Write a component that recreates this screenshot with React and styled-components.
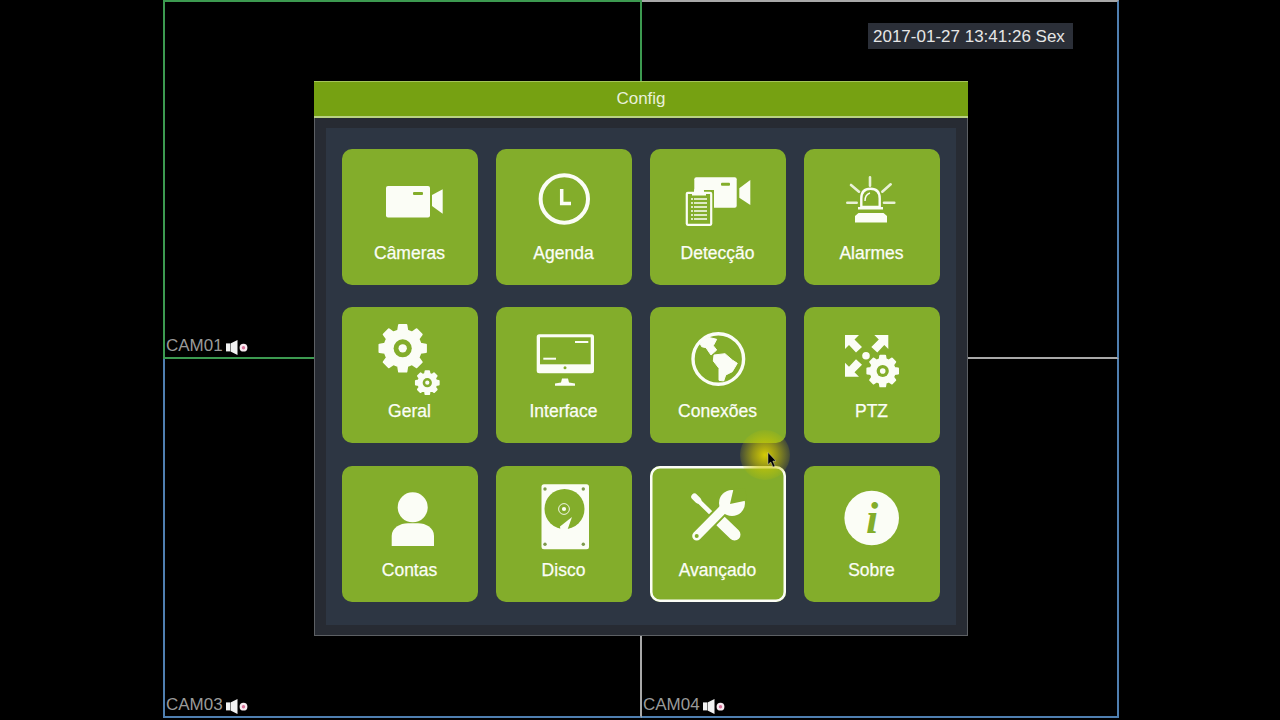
import React from 'react';
import styled, { createGlobalStyle } from 'styled-components';

const GREEN = '#83ad2b';
const WHITE = '#fbfdf6';

const GlobalStyle = createGlobalStyle`
  html, body {
    margin: 0;
    background: #000;
    font-family: "Liberation Sans", Arial, sans-serif;
  }
`;

const Screen = styled.div`
  position: relative;
  width: 1280px;
  height: 720px;
  overflow: hidden;
  background: #000;
  padding-left: 163px;
  box-sizing: border-box;
`;

const Wall = styled.div`
  display: grid;
  grid-template-columns: 479px 477px;
  grid-template-rows: 359px 359px;
  width: 956px;
  height: 718px;
`;

const Cell = styled.div`
  box-sizing: border-box;
  display: flex;
  align-items: flex-end;
  gap: 4px;
  padding: 0 0 1px 1px;
  border-style: solid;
  border-width: ${p => p.$widths};
  border-color: ${p => p.$colors};
`;

const CamName = styled.span`
  color: #9a9a9a;
  font-size: 17px;
  line-height: 20px;
`;

const SoundSvg = styled.svg`
  display: block;
  width: 22px;
  height: 15px;
  margin-left: -1px;
  margin-bottom: 1px;
`;

const Clock = styled.div`
  position: absolute;
  left: 868px;
  top: 23px;
  width: 205px;
  height: 26px;
  box-sizing: border-box;
  padding-left: 5px;
  background: #2b2f38;
  color: #e6e6e6;
  font-size: 17px;
  line-height: 27px;
  white-space: nowrap;
`;

const Modal = styled.div`
  position: absolute;
  left: 314px;
  top: 81px;
  width: 654px;
  height: 555px;
  box-sizing: border-box;
  display: flex;
  flex-direction: column;
  background: #272b33;
  border: 1px solid #5d6064;
  border-top: 0;
`;

const TitleBar = styled.div`
  flex: none;
  height: 37px;
  box-sizing: border-box;
  margin: 0 -1px;
  padding-bottom: 1px;
  display: flex;
  align-items: center;
  justify-content: center;
  background: #76a112;
  border-top: 1px solid #a5c45a;
  border-bottom: 2px solid #b9d184;
  color: #e9f0da;
  font-size: 17px;
`;

const Panel = styled.div`
  margin: 10px 11px 10px;
  flex: 1;
  box-sizing: border-box;
  padding: 21px 16px 23px;
  background: #2d3643;
  display: grid;
  grid-template-columns: repeat(4, 136px);
  grid-template-rows: repeat(3, 136px);
  column-gap: 18px;
  row-gap: 22.4px;
`;

const Tile = styled.div`
  box-sizing: border-box;
  width: 136px;
  height: 136px;
  background: ${GREEN};
  border-radius: 10px;
  color: ${WHITE};
  box-shadow: ${p => (p.$active ? `inset 0 0 0 2.5px ${WHITE}` : 'none')};
`;

const TileIcon = styled.svg`
  display: block;
  width: 136px;
  height: 92px;
`;

const TileLabel = styled.div`
  text-align: center;
  font-size: 17.5px;
  line-height: 25px;
  -webkit-text-stroke: 0.25px ${WHITE};
  transform: translateX(-0.5px);
`;

const Glow = styled.div`
  position: absolute;
  left: 740px;
  top: 430px;
  width: 50px;
  height: 50px;
  border-radius: 50%;
  background: radial-gradient(
    circle,
    rgba(222, 212, 0, 0.95) 0%,
    rgba(205, 200, 0, 0.62) 36%,
    rgba(190, 190, 0, 0.16) 70%,
    rgba(190, 190, 0, 0) 100%
  );
`;

const Pointer = styled.svg`
  position: absolute;
  left: 767px;
  top: 452px;
  width: 10px;
  height: 16px;
`;

const SoundIcon = () => (
  <SoundSvg viewBox="0 0 22 15">
    <rect x="0" y="3.400" width="4" height="8" fill="#f2f2f2" />
    <path d="M4.500 3.400 L11.500 0 V15 L4.500 11.400 Z" fill="#f2f2f2" />
    <circle cx="17.500" cy="7.700" r="3.900" fill="#f7eaf0" />
    <circle cx="17.500" cy="7.700" r="1.700" fill="#d9739a" />
  </SoundSvg>
);

// builds a toothed wheel outline around cx,cy
const gearPath = (cx, cy, r, teeth) => {
  const inner = r * 0.78;
  const step = (Math.PI * 2) / teeth;
  const pts = [];
  for (let i = 0; i < teeth; i++) {
    const a = i * step - Math.PI / 2;
    pts.push([a - step * 0.32, inner], [a - step * 0.2, r], [a + step * 0.2, r], [a + step * 0.32, inner]);
  }
  return (
    pts
      .map((p, i) => {
        const x = (cx + Math.cos(p[0]) * p[1]).toFixed(2);
        const y = (cy + Math.sin(p[0]) * p[1]).toFixed(2);
        return `${i ? 'L' : 'M'}${x} ${y}`;
      })
      .join(' ') + ' Z'
  );
};

const Gear = ({ x, y, r, teeth = 8 }) => (
  <g>
    <path d={gearPath(x, y, r - 1, teeth)} fill={WHITE} stroke={WHITE} strokeWidth="2" strokeLinejoin="round" />
    <circle cx={x} cy={y} r={r * 0.37} fill={GREEN} />
    <circle cx={x} cy={y} r={r * 0.17} fill={WHITE} />
  </g>
);

const icons = {
  camera: (
    <g fill={WHITE}>
      <rect x="44" y="37" width="44" height="31.500" rx="2" />
      <rect x="71" y="43" width="10" height="3" rx="1" fill={GREEN} />
      <path d="M90 46 L100.700 40.300 V64.700 L90 57 Z" />
    </g>
  ),
  clock: (
    <g fill="none" stroke={WHITE}>
      <circle cx="68.300" cy="50" r="23.700" strokeWidth="4" />
      <path d="M65.700 40 V54.500 H75" strokeWidth="3.500" />
    </g>
  ),
  detect: (
    <g>
      <g fill={WHITE}>
        <rect x="44.300" y="28.300" width="42.400" height="30.400" rx="2" />
        <rect x="71" y="33.700" width="9" height="3" rx="1" fill={GREEN} />
        <path d="M89.300 39.300 L100.300 31 V56 L89.300 48.700 Z" />
      </g>
      <rect x="34" y="41" width="30" height="38" fill={GREEN} />
      <rect x="36.800" y="43.800" width="24.400" height="32" rx="1" fill="none" stroke={WHITE} strokeWidth="2.200" />
      <path d="M44 43 V41.500 Q44 39.500 46 39.500 H52 Q54 39.500 54 41.500 V43 H56 V46.500 H42 V43 Z" fill={WHITE} />
      <path d="M41 50 H57 M41 54 H57 M41 58 H57 M41 62 H57 M41 66 H57 M41 70 H57" stroke={WHITE} strokeWidth="1.300" />
      <path d="M43.500 49 V71 " stroke={GREEN} strokeWidth="1" />
    </g>
  ),
  alarm: (
    <g>
      <path
        d="M66 28.300 V36.700 M47 36 L55 42.700 M86.700 35.300 L78.300 42.700 M43.300 53.700 H52.700 M80 53.700 H90.300"
        stroke={WHITE}
        strokeWidth="2.600"
        strokeLinecap="round"
        opacity="0.85"
      />
      <path d="M57.300 58 V49.500 Q57.300 39.800 66.500 39.800 Q75.700 39.800 75.700 49.500 V58 Z" fill="none" stroke={WHITE} strokeWidth="2.400" />
      <path d="M61 52 Q61 45.500 66 44" fill="none" stroke={WHITE} strokeWidth="1.400" />
      <rect x="54" y="58" width="25" height="2.500" fill={WHITE} />
      <path d="M54.500 64 H79.500 L83 67 V73.500 H51 V67 Z" fill={WHITE} />
    </g>
  ),
  gears: (
    <g>
      <Gear x={60.700} y={41.300} r={24.500} />
      <Gear x={85.300} y={75.700} r={12.500} />
    </g>
  ),
  monitor: (
    <g>
      <rect x="40.700" y="27.300" width="57.300" height="39" rx="2.500" fill={WHITE} />
      <rect x="44" y="30.300" width="50.700" height="27" fill={GREEN} />
      <rect x="79" y="34" width="13.300" height="2" fill={WHITE} />
      <rect x="47.300" y="50.700" width="12.700" height="2" fill={WHITE} />
      <circle cx="69" cy="60.700" r="1.500" fill={GREEN} />
      <path d="M66 71.500 H72 L73 75.500 L79 76.500 V78.700 H59 V76.500 L65 75.500 Z" fill={WHITE} />
    </g>
  ),
  globe: (
    <g>
      <circle cx="68.300" cy="52" r="25.300" fill="none" stroke={WHITE} strokeWidth="3.400" />
      <path
        d="M50 36.300 L53.300 33 L58.300 30.300 L66.700 32.300 L63.300 38.700 L66.700 43 L61 48 L56 40.700 L51.700 39.700 Z"
        fill={WHITE}
        stroke={WHITE}
        strokeLinejoin="round"
      />
      <path
        d="M64 48 L75 46.700 L82.300 53 L87.300 56.300 L82.300 64.700 L75.700 68 L73.700 74 L69 73.300 L69 61.300 L63.300 54 Z"
        fill={WHITE}
        stroke={WHITE}
        strokeLinejoin="round"
      />
    </g>
  ),
  ptz: (
    <g>
      <g fill={WHITE}>
        <path d="M41 28 H55 L50.500 32.500 L58 40 L52 45.500 L45 38 L41 42 Z" />
        <path d="M84.300 28 H70.300 L74.800 32.500 L67.300 40 L73.300 45.500 L80.300 38 L84.300 42 Z" />
        <path d="M41 69.700 H55 L50.500 65.200 L58 57.700 L52 52.200 L45 59.700 L41 55.700 Z" />
        <circle cx="62" cy="48.700" r="3.800" />
      </g>
      <Gear x={78.700} y={64} r={16.500} />
    </g>
  ),
  user: (
    <g fill={WHITE}>
      <circle cx="70.700" cy="41.300" r="15" />
      <path d="M49.700 80 V70 C49.700 62 58 57.300 66 57.300 H76 C84 57.300 92 62 92 70 V80 Z" />
    </g>
  ),
  disk: (
    <g>
      <rect x="45.500" y="18.300" width="47.500" height="65" rx="2.500" fill={WHITE} />
      <circle cx="68.500" cy="43" r="20" fill={GREEN} />
      <path d="M76 51 L64 60.500 L64.500 65 L71 65 Z" fill={WHITE} />
      <circle cx="68" cy="43" r="5.400" fill="none" stroke={WHITE} strokeWidth="0.900" />
      <circle cx="68" cy="43" r="2.100" fill={WHITE} />
      <g fill="#7e9a4c">
        <circle cx="49" cy="23" r="1.700" />
        <circle cx="87.300" cy="23" r="1.700" />
        <circle cx="49" cy="78.300" r="1.700" />
        <circle cx="87.300" cy="78.300" r="1.700" />
      </g>
    </g>
  ),
  tools: (
    <g>
      <path d="M45 31.300 L70 56" stroke={WHITE} strokeWidth="4.500" strokeLinecap="round" />
      <path d="M44.500 30.800 L48 34.300" stroke={WHITE} strokeWidth="6.500" strokeLinecap="round" />
      <path d="M71 55.500 L84.500 68.500" stroke={WHITE} strokeWidth="12" strokeLinecap="round" />
      <path d="M46.700 70 L73.300 43" stroke={GREEN} strokeWidth="13" strokeLinecap="round" />
      <path d="M46.700 70 L73.300 43" stroke={WHITE} strokeWidth="9" strokeLinecap="round" />
      <circle cx="82" cy="37" r="13" fill={WHITE} />
      <path d="M80 38 L83.500 23 L95.500 22 L96.500 34.500 Z" fill={GREEN} />
      <circle cx="46.700" cy="70" r="2" fill={GREEN} />
    </g>
  ),
  info: (
    <g>
      <circle cx="67.700" cy="52" r="27.300" fill={WHITE} />
      <text x="62" y="67" fill={GREEN} fontFamily="Liberation Serif, serif" fontStyle="italic" fontWeight="700" fontSize="44">
        i
      </text>
    </g>
  ),
};

const tiles = [
  { label: 'Câmeras', icon: 'camera' },
  { label: 'Agenda', icon: 'clock' },
  { label: 'Detecção', icon: 'detect' },
  { label: 'Alarmes', icon: 'alarm' },
  { label: 'Geral', icon: 'gears' },
  { label: 'Interface', icon: 'monitor' },
  { label: 'Conexões', icon: 'globe' },
  { label: 'PTZ', icon: 'ptz' },
  { label: 'Contas', icon: 'user' },
  { label: 'Disco', icon: 'disk' },
  { label: 'Avançado', icon: 'tools', active: true },
  { label: 'Sobre', icon: 'info' },
];

const GR = '#3c9a50';
const GY = '#a8a8a8';
const BL = '#4f7fb0';

const App = () => (
  <Screen>
    <GlobalStyle />
    <Wall>
      <Cell $widths="2px" $colors={GR}>
        <CamName>CAM01</CamName>
        <SoundIcon />
      </Cell>
      <Cell $widths="2px 2px 2px 0" $colors={`${GY} ${BL} ${GY} ${GY}`} />
      <Cell $widths="0 2px 2px 2px" $colors={`${BL} ${GY} ${BL} ${BL}`}>
        <CamName>CAM03</CamName>
        <SoundIcon />
      </Cell>
      <Cell $widths="0 2px 2px 0" $colors={BL}>
        <CamName>CAM04</CamName>
        <SoundIcon />
      </Cell>
    </Wall>
    <Clock>2017-01-27 13:41:26 Sex</Clock>
    <Modal>
      <TitleBar>Config</TitleBar>
      <Panel>
        {tiles.map(t => (
          <Tile key={t.label} $active={t.active}>
            <TileIcon viewBox="0 0 136 92">{icons[t.icon]}</TileIcon>
            <TileLabel>{t.label}</TileLabel>
          </Tile>
        ))}
      </Panel>
    </Modal>
    <Glow />
    <Pointer viewBox="0 0 10 16">
      <path d="M1 0.500 L9 9 L5.800 9 L8 14 L6 15 L3.800 10 L1 12.500 Z" fill="#000" stroke="#ddd" strokeWidth="0.400" />
    </Pointer>
  </Screen>
);

export default App;
